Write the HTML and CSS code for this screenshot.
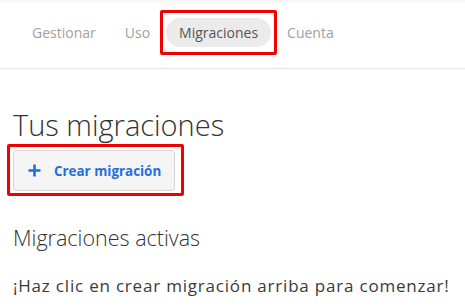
FILE: index.html
```html
<!DOCTYPE html>
<html lang="es">
<head>
<meta charset="utf-8">
<link rel="stylesheet" href="styles.css">
</head>
<body>
<nav class="nav">
  <a class="nav-item">Gestionar</a>
  <a class="nav-item">Uso</a>
  <a class="nav-item active">Migraciones</a>
  <a class="nav-item">Cuenta</a>
</nav>
<main class="content">
  <h1 class="title">Tus migraciones</h1>
  <div class="highlight">
    <button class="btn">
      <svg class="plus" viewBox="0 0 13 13" width="13" height="13"><path d="M6.5 0.5v12M0.5 6.5h12" stroke="currentColor" stroke-width="2.6" fill="none"/></svg>
      <span>Crear migración</span>
    </button>
  </div>
  <h2 class="subtitle">Migraciones activas</h2>
  <p class="hint">¡Haz clic en crear migración arriba para comenzar!</p>
</main>
</body>
</html>
```
FILE: styles.css
```css
* { box-sizing: border-box; }
body {
  margin: 0;
  font-family: "Open Sans", "DejaVu Sans", sans-serif;
  color: #333;
  background: #fff;
}
.nav {
  height: 69px;
  border-bottom: 1px solid #e6e6e6;
  display: flex;
  align-items: center;
  gap: 3px;
  padding: 0 0 4px 19px;
  background: linear-gradient(#f7f7f7, #fff 6px);
}
.nav-item {
  font-size: 14px;
  color: #a0a0a0;
  padding: 0 13px;
  height: 29px;
  line-height: 29px;
  border-radius: 15px;
  position: relative;
}
.nav-item.active {
  background: #ebebeb;
  color: #555;
}
.nav-item.active::after {
  content: "";
  position: absolute;
  inset: -8px -6px;
  border: 3px solid #f20000;
  border-radius: 2px;
}
.content {
  padding: 0 13px;
}
.title {
  margin: 38px 0 0;
  font-size: 29px;
  font-weight: 300;
  line-height: 36px;
  color: #333;
}
.highlight {
  display: inline-flex;
  border: 3px solid #f20000;
  padding: 3px 6px 2px 3px;
  margin: 1px 0 0 -6px;
  border-radius: 2px;
}
.btn {
  display: flex;
  align-items: center;
  gap: 13px;
  height: 41px;
  width: 162px;
  padding: 0 0 0 14px;
  background: #f5f5f5;
  border: 1px solid #d6d6d6;
  border-radius: 3px;
  font-family: inherit;
  font-size: 13.4px;
  font-weight: 700;
  color: #1f6fe0;
}
.plus { flex: none; }
.subtitle {
  margin: 27px 0 0;
  font-size: 21.5px;
  font-weight: 300;
  line-height: 30px;
  color: #333;
}
.hint {
  margin: 21px 0 0;
  font-size: 17px;
  letter-spacing: 0.8px;
  color: #3a3a3a;
}
```
